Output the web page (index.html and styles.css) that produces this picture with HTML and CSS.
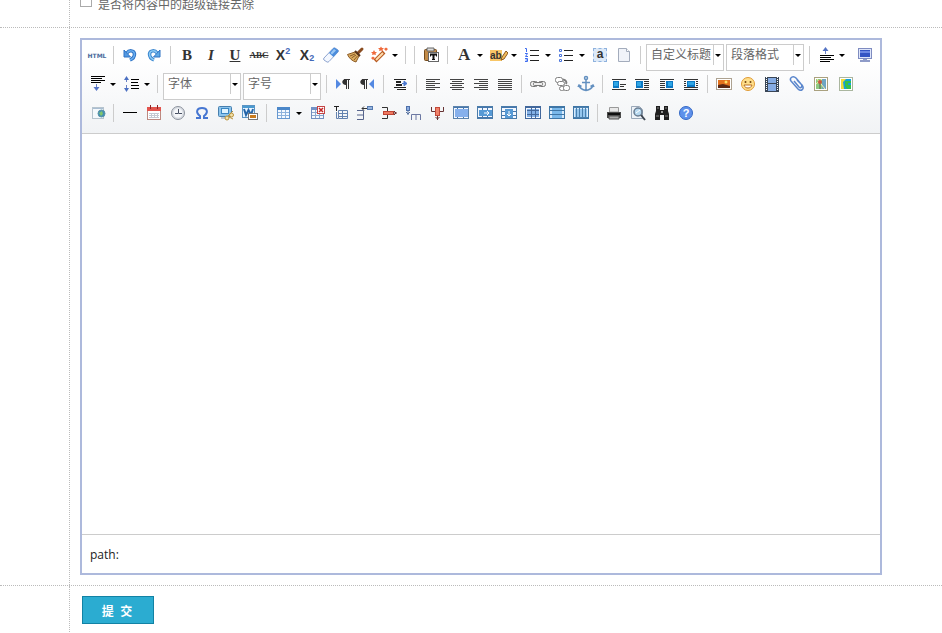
FILE: index.html
```html
<!DOCTYPE html>
<html lang="zh-CN">
<head>
    <meta charset="UTF-8">
    <meta name="viewport" content="width=device-width, initial-scale=1.0">
    <title>内容编辑</title>
    <link rel="stylesheet" href="styles.css">
</head>
<body>
<form class="form" action="#" method="post">
    <div class="row row-option">
        <div class="cell-label"></div>
        <div class="cell">
            <input type="checkbox" id="striplinks" name="striplinks">
            <label for="striplinks">是否将内容中的超级链接去除</label>
        </div>
    </div>

    <div class="row">
        <div class="cell-label"></div>
        <div class="cell">
            <div class="editor">
                <div class="toolbar">
                    <!-- line 1 -->
                    <div class="tools">
                        <button type="button" class="btn t-html" title="源代码">HTML</button>
                        <span class="sep"></span>
                        <button type="button" class="btn" title="撤销"><svg viewBox="0 0 20 20"><path d="M7 8C9 5 14 5 14.500 9C14.500 12 12.500 14 10 15" fill="none" stroke="#2f73c4" stroke-width="3.500"/><path d="M7 8C9 5 14 5 14.500 9C14.500 12 12.500 14 10 15" fill="none" stroke="#69aef0" stroke-width="1.500"/><path d="M4 5V12H10.500Z" fill="#5299e2" stroke="#2f73c4"/></svg></button>
                        <button type="button" class="btn" title="重做"><svg viewBox="0 0 20 20"><g transform="matrix(-1 0 0 1 20 0)"><path d="M7 8C9 5 14 5 14.500 9C14.500 12 12.500 14 10 15" fill="none" stroke="#3a86cf" stroke-width="3.500"/><path d="M7 8C9 5 14 5 14.500 9C14.500 12 12.500 14 10 15" fill="none" stroke="#8ccbf5" stroke-width="1.500"/><path d="M4 5V12H10.500Z" fill="#5eaae6" stroke="#2f73c4"/></g></svg></button>
                        <span class="sep"></span>
                        <button type="button" class="btn t-serif" title="加粗">B</button>
                        <button type="button" class="btn t-serif t-italic" title="斜体">I</button>
                        <button type="button" class="btn t-serif t-under" title="下划线">U</button>
                        <button type="button" class="btn t-strike" title="删除线">ABC</button>
                        <button type="button" class="btn t-script" title="上标">X<sup>2</sup></button>
                        <button type="button" class="btn t-script" title="下标">X<sub>2</sub></button>
                        <button type="button" class="btn" title="清除格式"><svg viewBox="0 0 20 20"><path d="M3 13L12 3.500Q13 2.500 14 3L17 5Q18 6 17 7L8 16.500Q7 17.500 6 17L3 15Q2 14 3 13Z" fill="#f4f8ff" stroke="#8fa5d0"/><path d="M8 8L12 3.500Q13 2.500 14 3L17 5Q18 6 17 7L12.500 12Z" fill="#4b8ddc"/><path d="M9.500 8L13 4L15 5.500L11 9.500Z" fill="#9cc8f5"/></svg></button>
                        <button type="button" class="btn" title="格式刷"><svg viewBox="0 0 20 20"><path d="M13 8L17 4" stroke="#8a4c20" stroke-width="3" stroke-linecap="round"/><path d="M2.500 9.500L10 7L14 11L11 17C7 16 4 13 2.500 9.500Z" fill="#dcae61" stroke="#8d5b26"/><path d="M5 11L10 9M6.500 13L11 10M9 15L12.500 11" stroke="#8d5b26"/><path d="M10 6L15 11" stroke="#59351b" stroke-width="2"/></svg></button>
                        <button type="button" class="btn btn-menu" title="自动排版"><svg viewBox="0 0 20 20"><path d="M6 16L15 7" stroke="#b85a20" stroke-width="4"/><path d="M7 15L14 8" stroke="#ffdcae" stroke-width="2"/><path d="M4 7L5 5L6 7L8 7L6.500 8.500L7 10L5 9.500L3 10L3.500 8.500L2 7ZM9 3H11L12 1.500L13 3H15L13.500 4.500L14 6L12 5.500L10 6L10.500 4.500ZM2 13L4 11.500L6 13L4 15ZM15 4L17 2.500L19 4L17 6Z" fill="#f06a3c"/></svg><i class="caret"></i></button>
                        <span class="sep"></span>
                        <span class="sep"></span>
                        <button type="button" class="btn" title="纯文本粘贴"><svg viewBox="0 0 20 20"><rect x="3.500" y="4.500" width="12" height="11" rx="1" fill="#c28b48" stroke="#774c1c"/><path d="M6 3H13V6H6Z" fill="#ddd" stroke="#666"/><rect x="7.500" y="7.500" width="10" height="9" fill="#fff" stroke="#666"/><path d="M9 9.500H16M12.500 9V15" fill="none" stroke="#111" stroke-width="2"/><path d="M9.500 9V11.500M15.500 9V11.500M11 14.500H14" stroke="#111"/></svg></button>
                        <span class="sep"></span>
                        <button type="button" class="btn btn-menu t-color" title="字体颜色"><span>A</span><i class="caret"></i></button>
                        <button type="button" class="btn btn-menu t-mark" title="背景色"><span>ab</span><svg class="pen" viewBox="0 0 8 12"><path d="M1 11L2 8L6 2L8 4L4 10Z" fill="#f3bd5c" stroke="#8b5a22"/></svg><i class="caret"></i></button>
                        <button type="button" class="btn btn-menu" title="有序列表"><svg viewBox="0 0 20 20"><path d="M8 5.500H17M8 10.500H17M8 15.500H17" stroke="#222"/><path d="M3 3.500H4.500V7M3 8.500H5.500L3.500 11.500H6M3 13.500H5.500V16.500H3M3.500 15H5" fill="none" stroke="#3d6cf0"/></svg><i class="caret"></i></button>
                        <button type="button" class="btn btn-menu" title="无序列表"><svg viewBox="0 0 20 20"><path d="M8 5.500H17M8 10.500H17M8 15.500H17" stroke="#222"/><path d="M3.500 4.500H5.500V6.500H3.500ZM3.500 9.500H5.500V11.500H3.500ZM3.500 14.500H5.500V16.500H3.500Z" fill="#fff" stroke="#4a75dd"/></svg><i class="caret"></i></button>
                        <button type="button" class="btn t-all" title="全选"><span>a</span></button>
                        <button type="button" class="btn" title="清空文档"><svg viewBox="0 0 20 20"><path d="M4.500 3.500H12.500L15.500 6.500V16.500H4.500Z" fill="#f0f3f9" stroke="#a3acbc"/><path d="M12.500 3.500V6.500H15.500" fill="#fff" stroke="#a3acbc"/></svg></button>
                        <span class="sep"></span>
                        <span class="combo"><select aria-label="自定义标题"><option>自定义标题</option></select></span>
                        <span class="combo"><select aria-label="段落格式"><option>段落格式</option></select></span>
                        <span class="sep"></span>
                        <button type="button" class="btn btn-menu" title="段前距"><svg viewBox="0 0 20 20"><path d="M4 10.500H18M4 12.500H15M4 14.500H18M4 16.500H14" stroke="#000"/><path d="M9.500 9V4" stroke="#6a80c4"/><path d="M6.500 6L9.500 2L12.500 6Z" fill="#5473c4"/></svg><i class="caret"></i></button>
                        <button type="button" class="btn btn-full" title="全屏"><svg viewBox="0 0 20 20"><rect x="3.500" y="3.500" width="13" height="10" fill="#dfe6fa" stroke="#7f8cc0"/><rect x="5" y="5" width="10" height="7" fill="#3454c4"/><path d="M5 7H15" stroke="#6d88e4" stroke-width="2"/><path d="M8 14H12V15H15V17H5V15H8Z" fill="#8e9bc8"/></svg></button>
                    </div>

                    <!-- line 2 -->
                    <div class="tools">
                        <button type="button" class="btn btn-menu" title="段后距"><svg viewBox="0 0 20 20"><path d="M4 2.500H18M4 4.500H15M4 6.500H18M4 8.500H14" stroke="#000"/><path d="M9.500 10V14" stroke="#6a80c4"/><path d="M6.500 13H12.500L9.500 17Z" fill="#5473c4"/></svg><i class="caret"></i></button>
                        <button type="button" class="btn btn-menu" title="行间距"><svg viewBox="0 0 20 20"><path d="M10 5.500H18M10 8.500H17M10 11.500H18M10 14.500H18" stroke="#000"/><path d="M5.500 5V8M5.500 11V15" stroke="#6a80c4"/><path d="M3 6L5.500 2L8 6ZM3 14H8L5.500 18Z" fill="#4b70c2"/></svg><i class="caret"></i></button>
                        <span class="sep"></span>
                        <span class="combo"><select aria-label="字体"><option>字体</option></select></span>
                        <span class="combo"><select aria-label="字号"><option>字号</option></select></span>
                        <span class="sep"></span>
                        <button type="button" class="btn" title="从左向右输入"><svg viewBox="0 0 20 20"><path d="M3 5L8 10L3 15Z" fill="#5489e2"/><path d="M17 5.500H11M13.500 5V15M15.500 5V15" fill="none" stroke="#333"/><path d="M13 5V11C8 11 8 5 13 5Z" fill="#333"/></svg></button>
                        <button type="button" class="btn" title="从右向左输入"><svg viewBox="0 0 20 20"><path d="M17 5L12 10L17 15Z" fill="#5489e2"/><path d="M11 5.500H5M7.500 5V15M9.500 5V15" fill="none" stroke="#333"/><path d="M7 5V11C2 11 2 5 7 5Z" fill="#333"/></svg></button>
                        <span class="sep"></span>
                        <button type="button" class="btn" title="首行缩进"><svg viewBox="0 0 20 20"><path d="M4 5.500H16M6 8H11M6 11H12M4 13.500H16M7 15.500H16" stroke="#222"/><path d="M6 8H11M6 11H12" stroke="#222" stroke-width="2"/><path d="M12 9.500H15M14 7L17 9.500L14 12Z" fill="#4b78cf" stroke="#4b78cf"/></svg></button>
                        <span class="sep"></span>
                        <button type="button" class="btn" title="居左对齐"><svg viewBox="0 0 20 20"><path d="M3 5.500H17M3 7.500H12M3 9.500H17M3 11.500H12M3 13.500H17M3 15.500H12" stroke="#444"/></svg></button>
                        <button type="button" class="btn" title="居中对齐"><svg viewBox="0 0 20 20"><path d="M3 5.500H17M5 7.500H15M3 9.500H17M5 11.500H15M3 13.500H17M5 15.500H15" stroke="#444"/></svg></button>
                        <button type="button" class="btn" title="居右对齐"><svg viewBox="0 0 20 20"><path d="M3 5.500H17M8 7.500H17M3 9.500H17M8 11.500H17M3 13.500H17M8 15.500H17" stroke="#444"/></svg></button>
                        <button type="button" class="btn" title="两端对齐"><svg viewBox="0 0 20 20"><path d="M3 5.500H17M3 7.500H17M3 9.500H17M3 11.500H17M3 13.500H17M3 15.500H17" stroke="#444"/></svg></button>
                        <span class="sep"></span>
                        <button type="button" class="btn" title="超链接"><svg viewBox="0 0 20 20"><g fill="#eee" stroke="#777"><rect x="2.500" y="7.500" width="7" height="5" rx="2"/><rect x="10.500" y="7.500" width="7" height="5" rx="2"/><rect x="5.500" y="8.500" width="9" height="3" rx="1"/></g></svg></button>
                        <button type="button" class="btn" title="取消链接"><svg viewBox="0 0 20 20"><g fill="#fff" stroke="#808080"><rect x="3.500" y="3.500" width="7" height="5" rx="2"/><rect x="5.500" y="7.500" width="7" height="4" rx="2"/><path d="M11 5.500C14 6 15 8 14 10" fill="none" stroke-width="2"/><rect x="7.500" y="12.500" width="5" height="4" rx="2"/><rect x="11.500" y="11.500" width="6" height="5" rx="2"/></g></svg></button>
                        <button type="button" class="btn" title="锚点"><svg viewBox="0 0 20 20"><g fill="none" stroke="#6390c0" stroke-width="1.500"><circle cx="10" cy="4" r="1.500"/><path d="M10 6V17M6 8.500H14M3 11C4 15 7 16 10 16.500C13 16 16 15 17 11M2 13L3 11L5.500 12.500M18 13L17 11L14.500 12.500"/></g></svg></button>
                        <span class="sep"></span>
                        <button type="button" class="btn" title="左浮动"><svg viewBox="0 0 20 20"><path d="M3 5.500H17M11 10.500H17M11 12.500H15M3 15.500H17" stroke="#333"/><rect x="4" y="7" width="6" height="7" fill="#0c78c4"/><rect x="5" y="8" width="4" height="4" fill="#2fa5e4"/></svg></button>
                        <button type="button" class="btn" title="默认"><svg viewBox="0 0 20 20"><path d="M2 5.500H16M11 7.500H16M11 9.500H16M11 11.500H16M11 13.500H16M2 15.500H16" stroke="#333"/><rect x="3" y="7" width="7" height="7" fill="#0c78c4"/><rect x="4" y="8" width="4" height="4" fill="#2fa5e4"/></svg></button>
                        <button type="button" class="btn" title="右浮动"><svg viewBox="0 0 20 20"><path d="M3 5.500H17M3 7.500H8M3 9.500H8M3 11.500H8M3 13.500H8M3 15.500H17" stroke="#333"/><rect x="9" y="7" width="7" height="7" fill="#0c78c4"/><rect x="11" y="8" width="4" height="4" fill="#2fa5e4"/></svg></button>
                        <button type="button" class="btn" title="居中"><svg viewBox="0 0 20 20"><path d="M3 5.500H17M3 7.500H5M15 7.500H17M3 9.500H5M15 9.500H17M3 11.500H5M15 11.500H17M3 13.500H17M3 15.500H17" stroke="#333"/><rect x="6" y="7" width="8" height="6" fill="#0c78c4"/><rect x="7" y="8" width="6" height="3" fill="#2fa5e4"/></svg></button>
                        <span class="sep"></span>
                        <button type="button" class="btn" title="图片"><svg viewBox="0 0 20 20"><rect x="2.500" y="4.500" width="15" height="11" fill="#fff" stroke="#ada291"/><rect x="4" y="6" width="12" height="8" fill="#e3711d"/><path d="M4 11L9 10L16 12V14H4Z" fill="#5a2814"/><circle cx="12" cy="8" r="1.500" fill="#ffdf64"/></svg></button>
                        <button type="button" class="btn" title="表情"><svg viewBox="0 0 20 20"><circle cx="10" cy="10" r="6.500" fill="#ffdf8a" stroke="#e09a35"/><circle cx="7.500" cy="8" r="1" fill="#70420e"/><circle cx="12.500" cy="8" r="1" fill="#70420e"/><path d="M6 11H14C13 15 7 15 6 11Z" fill="#fff" stroke="#b86f24"/></svg></button>
                        <button type="button" class="btn" title="视频"><svg viewBox="0 0 20 20"><rect x="3" y="3" width="14" height="15" fill="#3a4656"/><path d="M6 4H14V9H6ZM6 10H14V17H6Z" fill="#86ace4"/><path d="M4.500 3V17M15.500 3V17" stroke="#fff" stroke-dasharray="1 1"/></svg></button>
                        <button type="button" class="btn" title="附件"><svg viewBox="0 0 20 20"><path d="M8 7L13 13C15 15 17 12 15 10L10 4C7 1 3 4 5 7L12 15C15 18 19 15 16 11L11 6" fill="none" stroke="#5a86cc" stroke-width="1.500"/></svg></button>
                        <button type="button" class="btn" title="Google地图"><svg viewBox="0 0 20 20"><rect x="4.500" y="3.500" width="13" height="13" fill="#fff" stroke="#aaa17f"/><path d="M6 5H16V15H6Z" fill="#8fca80"/><path d="M12 5H16V15H12Z" fill="#6fa6c4"/><path d="M7 5L15 15M6 10L12 5" stroke="#fff3a4"/><path d="M10 15V9" stroke="#555"/><circle cx="10" cy="8" r="2" fill="#c9573f"/></svg></button>
                        <button type="button" class="btn" title="百度地图"><svg viewBox="0 0 20 20"><rect x="5.500" y="3.500" width="13" height="13" fill="#fff" stroke="#aab69f"/><path d="M7 5H17V15H7Z" fill="#14a0dc"/><path d="M7 5H12L9 8L10 15H7Z" fill="#f0dc3c"/><path d="M11 7H17V9H14V11H17V15H13L11 12Z" fill="#35c04c"/></svg></button>
                    </div>

                    <!-- line 3 -->
                    <div class="tools">
                        <button type="button" class="btn" title="插入Iframe"><svg viewBox="0 0 20 20"><rect x="5.500" y="4.500" width="11" height="11" fill="#f5f9fc" stroke="#b6c4ce"/><path d="M6 5.500H16" stroke="#a9bdd2"/><circle cx="14.500" cy="10.500" r="3.500" fill="#438fb4" stroke="#5a93a8"/><path d="M12 10L15 8L16 11L14 13" fill="#81c66c"/></svg></button>
                        <span class="sep"></span>
                        <button type="button" class="btn" title="分隔线"><svg viewBox="0 0 20 20"><path d="M3 9.500H17" stroke="#000"/></svg></button>
                        <button type="button" class="btn" title="日期"><svg viewBox="0 0 20 20"><rect x="3.500" y="4.500" width="13" height="12" fill="#fff" stroke="#bd8980"/><path d="M3 4H17V8H3Z" fill="#e2544d"/><path d="M6.500 2V6M13.500 2V6" stroke="#8f2323"/><path d="M5 10.500H15M5 12.500H15M5 14.500H15M7.500 10V15M10.500 10V15M13.500 10V15" stroke="#c5c9d2"/></svg></button>
                        <button type="button" class="btn" title="时间"><svg viewBox="0 0 20 20"><circle cx="10" cy="10" r="6.500" fill="#d9dde3" stroke="#8d939e"/><circle cx="10" cy="10" r="4.500" fill="#f4f6f9"/><path d="M10.500 6V10.500H14M7 10.500H10" fill="none" stroke="#475063"/></svg></button>
                        <button type="button" class="btn" title="特殊字符"><svg viewBox="0 0 20 20"><path d="M4 15H8V13C3 9 5 5 10 5S17 9 12 13V15H16" fill="none" stroke="#4676d1" stroke-width="2"/></svg></button>
                        <button type="button" class="btn" title="截图"><svg viewBox="0 0 20 20"><rect x="2.500" y="3.500" width="13" height="10" rx="1" fill="#8cc4ec" stroke="#477fae"/><rect x="5.500" y="5.500" width="7" height="5" fill="#dff3fe" stroke="#3b86c2"/><path d="M5 15H11" stroke="#8298b0"/><g fill="#f3e0a8" stroke="#b8923b"><circle cx="11" cy="15" r="2"/><circle cx="15.500" cy="12" r="2"/><path d="M12 13L17 8M13 14L17 16"/></g></svg></button>
                        <button type="button" class="btn" title="图片转存"><svg viewBox="0 0 20 20"><rect x="2.500" y="2.500" width="12" height="12" fill="#e8f4ff" stroke="#5a94c4"/><path d="M3 3H14V5H3Z" fill="#4a9ad0"/><path d="M4 6L6 12L8.500 7L11 12L13 6" fill="none" stroke="#2364a8" stroke-width="2"/><rect x="8.500" y="10.500" width="9" height="6" fill="#fff" stroke="#777"/><rect x="10" y="12" width="6" height="3" fill="#c97b1d"/></svg></button>
                        <span class="sep"></span>
                        <button type="button" class="btn btn-menu" title="插入表格"><svg viewBox="0 0 20 20"><rect x="4.500" y="4.500" width="12" height="11" fill="#f4f9ff" stroke="#6698d0"/><path d="M4 4H17V7H4Z" fill="#4b87c9"/><path d="M5 9.500H16M5 12.500H16M8.500 7V15M12.500 7V15" stroke="#8db2dc"/></svg><i class="caret"></i></button>
                        <button type="button" class="btn" title="删除表格"><svg viewBox="0 0 20 20"><rect x="4.500" y="4.500" width="12" height="11" fill="#f4f9ff" stroke="#708ec0"/><path d="M4 4H12V7H4Z" fill="#7191c6"/><path d="M5 9.500H16M5 12.500H16M8.500 7V15M12.500 7V15" stroke="#8ca8cf"/><rect x="10.500" y="3.500" width="7" height="7" fill="#fff" stroke="#c44646"/><path d="M12 5L16 9M16 5L12 9" stroke="#c52424" stroke-width="1.500"/></svg></button>
                        <button type="button" class="btn" title="表格前插入行"><svg viewBox="0 0 20 20"><path d="M3 3.500H8M5.500 3V8" stroke="#222"/><path d="M7.500 7.500H16.500V15.500H7.500ZM7 10.500H17M7 13.500H17M11.500 8V16M5.500 9V15.500H7" fill="none" stroke="#6382af"/></svg></button>
                        <button type="button" class="btn" title="前插入行"><svg viewBox="0 0 20 20"><path d="M2 7.500H8.500V16.500H2M2 12H8" fill="none" stroke="#56648c"/><rect x="12.500" y="3.500" width="5" height="3" fill="#96b5df" stroke="#5579ae"/><path d="M12 5.500H7M9 3.500L7 5.500L9 7.500" fill="none" stroke="#333"/></svg></button>
                        <button type="button" class="btn" title="删除行"><svg viewBox="0 0 20 20"><path d="M3 4.500H8.500V8M3 15.500H8.500V12" fill="none" stroke="#333"/><rect x="4.500" y="8.500" width="10" height="3" fill="#ee7961" stroke="#bf4433"/><path d="M14 10H18M15 8L17 10L15 12" fill="none" stroke="#6a3434"/></svg></button>
                        <button type="button" class="btn" title="前插入列"><svg viewBox="0 0 20 20"><rect x="3.500" y="3.500" width="3" height="4" fill="#8dade0" stroke="#4e70aa"/><path d="M5 8V12M3 9L5 11L7 9" fill="none" stroke="#55709f"/><path d="M8.500 17V11.500H17.500V17M13 12V17" fill="none" stroke="#6c78a2"/></svg></button>
                        <button type="button" class="btn" title="删除列"><svg viewBox="0 0 20 20"><path d="M4.500 4V8.500H8M16.500 4V8.500H12" fill="none" stroke="#633"/><rect x="8.500" y="4.500" width="4" height="8" fill="#ef826a" stroke="#c44838"/><path d="M10.500 13V17M8.500 14L10.500 16L12.500 14" fill="none" stroke="#633"/></svg></button>
                        <button type="button" class="btn" title="合并多个单元格"><svg viewBox="0 0 20 20"><rect x="2.500" y="3.500" width="15" height="12" fill="#f4f8ff" stroke="#5c83ac"/><path d="M3 4.500H17M6.500 4V7M12.500 4V7M6.500 13V15M12.500 13V15" stroke="#4677ac"/><rect x="4" y="6" width="13" height="8" fill="#86b0ec"/></svg></button>
                        <button type="button" class="btn" title="右合并单元格"><svg viewBox="0 0 20 20"><rect x="2.500" y="3.500" width="15" height="12" fill="#f4f8ff" stroke="#4b7caa"/><path d="M3 4.500H17M3 14.500H17M7.500 4V7M12.500 4V7M7.500 13V15M12.500 13V15" stroke="#4677ac"/><rect x="4" y="7" width="13" height="6" fill="#579ad5"/><path d="M9 10H14M12 8L14 10L12 12" fill="none" stroke="#fff"/></svg></button>
                        <button type="button" class="btn" title="下合并单元格"><svg viewBox="0 0 20 20"><rect x="2.500" y="3.500" width="15" height="12" fill="#f4f8ff" stroke="#4b7caa"/><path d="M3 4.500H17M3 8.500H17M3 12.500H17" stroke="#4677ac"/><rect x="6" y="6" width="8" height="9" fill="#579ad5"/><path d="M10 8V13M8 11L10 13L12 11" fill="none" stroke="#fff"/></svg></button>
                        <button type="button" class="btn" title="拆分成行列"><svg viewBox="0 0 20 20"><rect x="2.500" y="3.500" width="15" height="12" fill="#f4f8ff" stroke="#42689c"/><rect x="4" y="6" width="12" height="8" fill="#82b0e6"/><path d="M3 4.500H17M4 7.500H16M4 11.500H16M8.500 4V15M12.500 4V15" stroke="#42689c"/></svg></button>
                        <button type="button" class="btn" title="拆分成行"><svg viewBox="0 0 20 20"><rect x="2.500" y="3.500" width="15" height="12" fill="#d9ebfc" stroke="#3f76a6"/><rect x="5" y="5" width="10" height="10" fill="#7ab8ea"/><path d="M3 4.500H17M3 7.500H17M3 11.500H17" stroke="#3f76a6"/></svg></button>
                        <button type="button" class="btn" title="拆分成列"><svg viewBox="0 0 20 20"><rect x="2.500" y="3.500" width="15" height="12" fill="#d9ebfc" stroke="#3f76a6"/><rect x="4" y="6" width="12" height="8" fill="#95c6ee"/><path d="M3 4.500H17M3 14.500H17M5.500 4V15M8.500 4V15M11.500 4V15M14.500 4V15" stroke="#4a80ae"/></svg></button>
                        <span class="sep"></span>
                        <button type="button" class="btn" title="打印"><svg viewBox="0 0 20 20"><path d="M5.500 4.500H14.500V9H5.500Z" fill="#e8e8e8" stroke="#999"/><path d="M3 9H17V15H3Z" fill="#4a4a4a"/><path d="M5 13H15V16H5Z" fill="#aaa" stroke="#555"/><path d="M4 11H16" stroke="#111" stroke-width="2"/></svg></button>
                        <button type="button" class="btn" title="预览"><svg viewBox="0 0 20 20"><path d="M3.500 3.500H11.500L14.500 6.500V15.500H3.500Z" fill="#eef3f8" stroke="#9aa8b8"/><circle cx="10" cy="9" r="4" fill="#b6d8ef" stroke="#6a7d92" stroke-width="1.500"/><path d="M13 12L17 17" stroke="#3e4651" stroke-width="2"/><path d="M8 10L12 7" stroke="#fff"/></svg></button>
                        <button type="button" class="btn" title="查询替换"><svg viewBox="0 0 20 20"><path d="M4 3H8V7H12V3H16V8L17 11V17H12V12H8V17H3V11L4 8Z" fill="#202020"/><path d="M5 5H7M13 5H15M4 13H7M13 13H16" stroke="#858585"/><rect x="9" y="8" width="2" height="2" fill="#999"/></svg></button>
                        <button type="button" class="btn t-help" title="帮助"><span>?</span></button>
                    </div>
                </div>
                <textarea class="editor-body" name="content" aria-label="内容"></textarea>
                <div class="editor-path">path:</div>
            </div>
        </div>
    </div>

    <div class="row row-submit">
        <div class="cell-label"></div>
        <div class="cell">
            <button type="submit" class="submit">提&nbsp;&nbsp;交</button>
        </div>
    </div>
</form>
</body>
</html>
```

FILE: styles.css
```css
* {
    box-sizing: border-box;
}

body {
    margin: 0;
    background: #fff;
    color: #666;
    font: 12px/16px "Liberation Sans", "Noto Sans CJK SC", sans-serif;
}

.form {
    display: flex;
    flex-direction: column;
    min-height: 100vh;
}

.row {
    display: grid;
    grid-template-columns: 70px minmax(0, 1fr);
    border-bottom: 1px dotted #bbb;
}

.cell-label {
    border-right: 1px dotted #bbb;
}

.cell {
    padding: 10px;
}

/* the option line is partly scrolled out of view */
.row-option {
    height: 28px;
    overflow: hidden;
}

.row-option .cell {
    display: flex;
    align-items: flex-end;
    gap: 6px;
    height: 27px;
    padding: 0 10px 14px;
}

.row-option input {
    appearance: none;
    width: 12px;
    height: 12px;
    margin: 0 0 6px;
    border: 1px solid #aaa;
    background: #fff;
}

.row-option input:checked {
    background: #2bacd1;
}

.row-submit {
    flex: 1;
    border-bottom: none;
}

/* editor */
.editor {
    max-width: 802px;
    border: 2px solid #adb9dc;
}

.toolbar {
    padding: 3px;
    border-bottom: 1px solid #ccc;
    background: linear-gradient(#fff 20%, #f1f3f5);
}

.tools {
    display: flex;
    flex-wrap: wrap;
    align-items: flex-start;
    min-height: 29px;
}

.btn {
    display: flex;
    align-items: center;
    justify-content: center;
    width: 24px;
    height: 24px;
    padding: 0;
    border: none;
    background: none;
    color: #333;
    cursor: pointer;
}

.btn:hover {
    background: #fff5d4;
}

.btn svg {
    flex: none;
    width: 20px;
    height: 20px;
}

.btn-menu {
    justify-content: flex-start;
    width: 34px;
    padding-left: 2px;
}

.btn-full {
    margin-left: 5px;
}

.caret {
    flex: none;
    margin-left: auto;
    margin-right: 3px;
    border: 3px solid transparent;
    border-top-color: #000;
    border-bottom: none;
}

.sep {
    width: 1px;
    height: 18px;
    margin: 3px 4px;
    background: #ccc;
}

/* buttons drawn with letters */
.t-html {
    color: #4a6a9c;
    font: bold 6px "DejaVu Sans", sans-serif;
}

.t-serif {
    font: bold 15px "Liberation Serif", serif;
}

.t-italic {
    font-style: italic;
}

.t-under {
    text-decoration: underline;
}

.t-strike {
    font: bold 9px "Liberation Serif", serif;
    text-decoration: line-through;
}

.t-script {
    font: bold 14px "Liberation Sans", sans-serif;
}

.t-script sup,
.t-script sub {
    color: #4368b8;
    font-size: 9px;
    line-height: 9px;
}

.t-script sup {
    align-self: flex-start;
    padding-top: 4px;
}

.t-script sub {
    align-self: flex-end;
    padding-bottom: 4px;
}

.t-color {
    padding-left: 6px;
    font: bold 17px "Liberation Serif", serif;
}

.t-mark {
    padding-left: 4px;
    font: bold 10px "Liberation Sans", sans-serif;
}

.t-mark span {
    background: #f8c667;
    line-height: 11px;
}

.t-mark .pen {
    width: 8px;
    height: 12px;
    margin-left: -2px;
}

.t-all span {
    width: 14px;
    height: 14px;
    border: 1px dashed #8fb2de;
    background: #dce9f8;
    font: bold 12px/11px "Liberation Sans", sans-serif;
}

.t-help span {
    width: 14px;
    height: 14px;
    border: 1px solid #3569c5;
    border-radius: 50%;
    background: #5f91eb;
    color: #fff;
    font: bold 11px/12px "Liberation Sans", sans-serif;
}

/* drop-downs */
.combo {
    position: relative;
    width: 78px;
    margin: 1px 1px 0;
}

.combo select {
    appearance: none;
    display: block;
    width: 100%;
    height: 27px;
    padding: 0 11px 5px 4px;
    border: 1px solid #ccc;
    border-radius: 0;
    background: #fff;
    color: #666;
    font: inherit;
}

.combo::before {
    content: "";
    position: absolute;
    top: 1px;
    right: 10px;
    height: 20px;
    border-left: 1px solid #ccc;
    pointer-events: none;
}

.combo::after {
    content: "";
    position: absolute;
    top: 10px;
    right: 3px;
    border: 3px solid transparent;
    border-top-color: #000;
    border-bottom: none;
    pointer-events: none;
}

.editor-body {
    display: block;
    width: 100%;
    height: 400px;
    padding: 8px;
    border: none;
    outline: none;
    resize: none;
    font: inherit;
}

.editor-path {
    height: 39px;
    padding: 0 8px;
    border-top: 1px solid #ccc;
    color: #222;
    font: 12px/40px "Open Sans", sans-serif;
}

.submit {
    width: 72px;
    height: 28px;
    margin-left: 2px;
    padding: 0 2px 0 0;
    border: 1px solid #1282a4;
    background: #2bacd1;
    color: #fff;
    font: bold 12px "Liberation Sans", "Noto Sans CJK SC", sans-serif;
    cursor: pointer;
}
```
